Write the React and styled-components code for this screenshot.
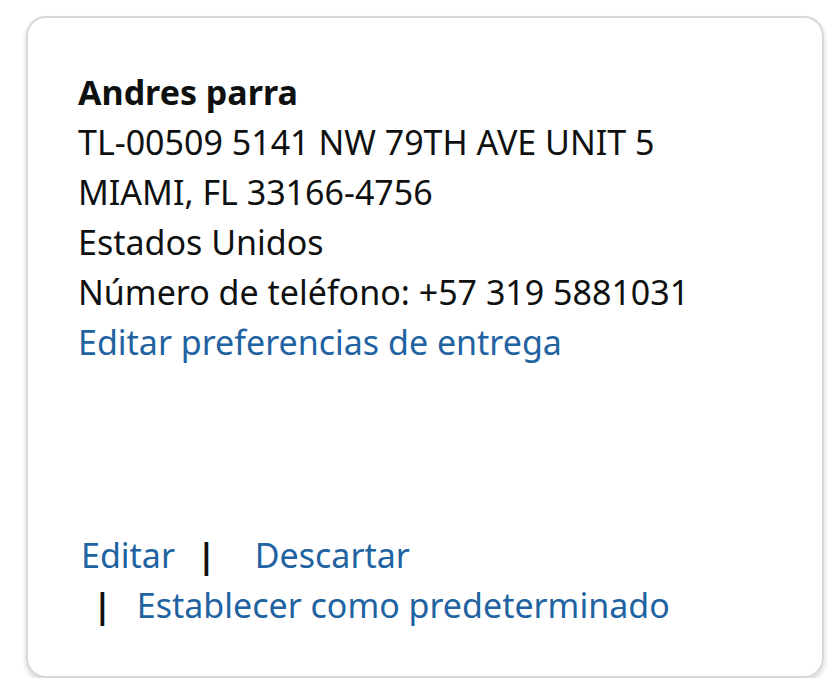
import styled, { createGlobalStyle } from "styled-components";

const GlobalStyle = createGlobalStyle`
  body {
    margin: 0;
    background: #fff;
    font-family: "Noto Sans", "Open Sans", Arial, sans-serif;
    color: #0f1111;
  }
`;

const Page = styled.div`
  padding: 16px 0 0 26px;
`;

const Card = styled.div`
  box-sizing: border-box;
  width: 798px;
  height: 662px;
  border: 2px solid #d5d9d9;
  border-radius: 20px;
  box-shadow: 0 3px 5px rgba(15, 17, 17, 0.18);
  padding: 49px 40px 46px 50px;
  display: flex;
  flex-direction: column;
`;

const Line = styled.div`
  font-size: 34px;
  line-height: 50px;
  font-weight: ${(p) => (p.$bold ? 700 : 400)};
  white-space: nowrap;
`;

const Link = styled.a`
  color: #2162a1;
  text-decoration: none;
  cursor: pointer;
`;

const Actions = styled.div`
  margin-top: auto;
  font-size: 34px;
  line-height: 50px;
`;

const ActionRow = styled.div`
  display: flex;
  align-items: baseline;
  padding-left: ${(p) => p.$indent || 0}px;
`;

const Sep = styled.span`
  color: #0f1111;
  font-weight: 700;
  margin: 0 ${(p) => p.$right}px 0 ${(p) => p.$left}px;
`;

export default function App() {
  return (
    <>
      <GlobalStyle />
      <Page>
        <Card>
          <Line $bold>Andres parra</Line>
          <Line>TL-00509 5141 NW 79TH AVE UNIT 5</Line>
          <Line>MIAMI, FL 33166-4756</Line>
          <Line>Estados Unidos</Line>
          <Line>Número de teléfono: +57 319 5881031</Line>
          <Line>
            <Link>Editar preferencias de entrega</Link>
          </Line>
          <Actions>
            <ActionRow $indent={3}>
              <Link>Editar</Link>
              <Sep $left={22} $right={39}>|</Sep>
              <Link>Descartar</Link>
            </ActionRow>
            <ActionRow $indent={15}>
              <Sep $left={0} $right={25}>|</Sep>
              <Link>Establecer como predeterminado</Link>
            </ActionRow>
          </Actions>
        </Card>
      </Page>
    </>
  );
}
